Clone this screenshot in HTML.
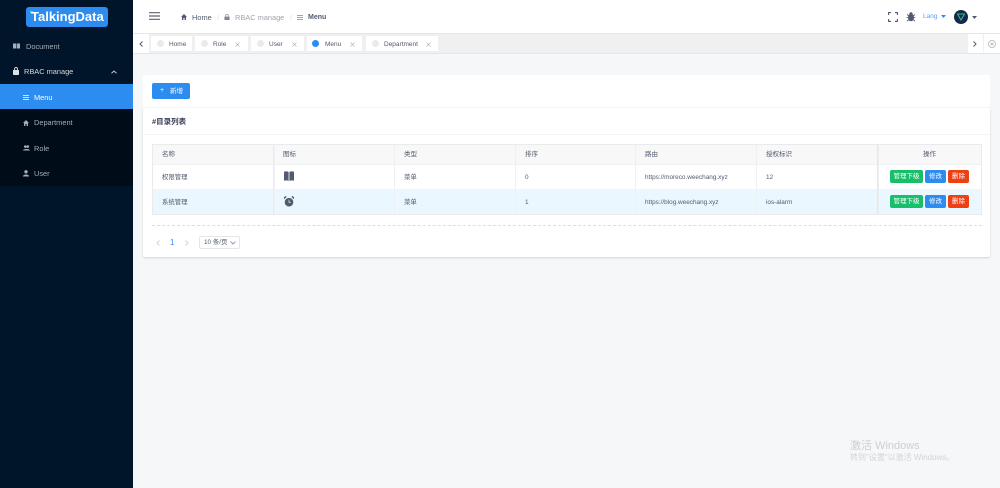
<!DOCTYPE html>
<html lang="zh">
<head>
<meta charset="utf-8">
<title>Menu</title>
<style>
html{margin:0;padding:0;width:1000px;height:488px;overflow:hidden;background:#f5f7f9}
body{margin:0;padding:0;width:1000px;height:488px;overflow:hidden;background:#f5f7f9;font-family:"Liberation Sans","Noto Sans CJK SC",sans-serif;color:#515a6e;filter:blur(.3px)}
*{box-sizing:border-box}
.a{position:absolute}
.t{position:absolute;white-space:nowrap;line-height:12px}
svg{position:absolute;display:block}
#side{left:0;top:0;width:133px;height:488px;background:#001529}
#sub{left:0;top:84px;width:133px;height:102px;background:#000c17}
.tab{position:absolute;top:36px;height:15px;background:#fff}
.dot{position:absolute;top:4px;width:7px;height:7px;border-radius:50%;background:#e8eaec}
.tab .t{top:3px;font-size:6.500px;color:#515a6e}
.th{position:absolute;top:149px;font-size:6.500px;color:#515a6e}
.td{position:absolute;font-size:6.400px;color:#515a6e}
.vl{position:absolute;top:144px;width:1px;height:70px;background:#eef0f2}
.btn{position:absolute;height:13px;border-radius:2px;color:#fff;font-size:6.500px;line-height:14px;text-align:center}
.m{font-size:7.400px}
</style>
</head>
<body>
<div id="side" class="a"></div>
<div id="sub" class="a"></div>
<div class="a" style="left:0;top:84px;width:133px;height:25px;background:#2d8cf0"></div>

<div class="a" style="left:26px;top:7px;width:82px;height:20px;background:#2d8cf0;border-radius:3px"></div>
<div class="a" style="left:30px;top:11px;width:3px;height:2px;background:#3fe0c0"></div>
<div class="t" style="left:31px;top:9px;font-size:13px;line-height:16px;font-weight:bold;color:#fff">TalkingData</div>

<svg style="left:13px;top:43px" width="7" height="6" viewBox="0 0 7 6"><path d="M0 .5h3.200v5H0zM3.800.5H7v5H3.800z" fill="#a6adb4"/></svg>
<div class="t m" style="left:26px;top:41px;color:#a6adb4">Document</div>
<svg style="left:13px;top:67px" width="6" height="8" viewBox="0 0 6 8"><path d="M1.500 3V2a1.500 1.500 0 0 1 3 0v1" fill="none" stroke="#dfe2e5" stroke-width=".9"/><rect y="3" width="6" height="5" rx=".6" fill="#dfe2e5"/></svg>
<div class="t m" style="left:24px;top:66px;color:#d5d8db">RBAC manage</div>
<svg style="left:111px;top:70px" width="6" height="4" viewBox="0 0 6 4"><path d="M.5 3.300 3 1l2.500 2.300" fill="none" stroke="#c5c9cd" stroke-width="1"/></svg>

<svg style="left:23px;top:95px" width="6" height="5" viewBox="0 0 6 5"><path d="M0 .5h6M0 2.500h6M0 4.500h6" stroke="#fff" stroke-width=".8"/></svg>
<div class="t m" style="left:34px;top:92px;color:#fff">Menu</div>
<svg style="left:23px;top:120px" width="6" height="6" viewBox="0 0 6 6"><path d="M3 0 6 3H5V6H3.600V4H2.400V6H1V3H0z" fill="#a6adb4"/></svg>
<div class="t m" style="left:34px;top:117px;color:#a6adb4">Department</div>
<svg style="left:23px;top:145px" width="7" height="6" viewBox="0 0 7 6"><circle cx="2.300" cy="1.600" r="1.300" fill="#a6adb4"/><circle cx="4.800" cy="1.600" r="1.300" fill="#a6adb4"/><path d="M0 5.500C0 3.500 7 3.500 7 5.500z" fill="#a6adb4"/></svg>
<div class="t m" style="left:34px;top:143px;color:#a6adb4">Role</div>
<svg style="left:23px;top:170px" width="6" height="7" viewBox="0 0 6 7"><circle cx="3" cy="1.800" r="1.700" fill="#a6adb4"/><path d="M0 6.500C0 3.800 6 3.800 6 6.500z" fill="#a6adb4"/></svg>
<div class="t m" style="left:34px;top:168px;color:#a6adb4">User</div>

<!-- header -->
<div class="a" style="left:133px;top:0;width:867px;height:33px;background:#fff"></div>
<svg style="left:149px;top:12px" width="11" height="8" viewBox="0 0 11 8"><path d="M0 .7h11M0 4h11M0 7.300h11" stroke="#5d6470" stroke-width="1.200"/></svg>
<svg style="left:181px;top:14px" width="6" height="6" viewBox="0 0 6 6"><path d="M3 0 6 3H5V6H3.600V4H2.400V6H1V3H0z" fill="#515a6e"/></svg>
<div class="t m" style="left:192px;top:12px;color:#515a6e">Home</div>
<div class="t m" style="left:217px;top:12px;color:#dcdee2">/</div>
<svg style="left:224px;top:14px" width="6" height="6" viewBox="0 0 6 7"><path d="M1.500 3V2a1.500 1.500 0 0 1 3 0v1" fill="none" stroke="#808695" stroke-width=".8"/><rect y="3" width="6" height="4" rx=".5" fill="#808695"/></svg>
<div class="t m" style="left:235px;top:12px;color:#a0a4ad">RBAC manage</div>
<div class="t m" style="left:290px;top:12px;color:#dcdee2">/</div>
<svg style="left:297px;top:15px" width="6" height="5" viewBox="0 0 6 5"><path d="M0 .5h6M0 2.500h6M0 4.500h6" stroke="#808695" stroke-width=".8"/></svg>
<div class="t" style="left:308px;top:12px;font-size:7px;font-weight:bold;color:#515a6e">Menu</div>

<svg style="left:888px;top:12px" width="10" height="10" viewBox="0 0 10 10"><path d="M.6 3V.6H3M7 .6h2.400V3M9.400 7v2.400H7M3 9.400H.6V7" fill="none" stroke="#515a6e" stroke-width="1.100"/></svg>
<svg style="left:906px;top:12px" width="10" height="10" viewBox="0 0 10 10"><ellipse cx="5" cy="5.500" rx="3" ry="3.800" fill="#515a6e"/><path d="M1 2.500 3 4M9 2.500 7 4M.6 5.500H2M9.400 5.500H8M1 9l2-1.500M9 9 7 7.500" stroke="#515a6e" stroke-width=".8"/><circle cx="5" cy="1.800" r="1.600" fill="#515a6e"/></svg>
<div class="t" style="left:923px;top:11px;font-size:6.500px;color:#5a9cf0">Lang</div>
<svg style="left:941px;top:15px" width="5" height="3" viewBox="0 0 5 3"><path d="M0 0h5L2.500 3z" fill="#2d8cf0"/></svg>
<div class="a" style="left:954px;top:10px;width:14px;height:14px;border-radius:50%;background:#13294b"></div>
<svg style="left:957px;top:13px" width="8" height="8" viewBox="0 0 8 8"><path d="M.5 1h7L4 7z" fill="none" stroke="#3fb984" stroke-width="1.100"/></svg>
<svg style="left:972px;top:16px" width="5" height="3" viewBox="0 0 5 3"><path d="M0 0h5L2.500 3z" fill="#515a6e"/></svg>

<!-- tabs -->
<div class="a" style="left:133px;top:33px;width:867px;height:21px;background:#f0f0f0;border-top:1px solid #e6e6e6;border-bottom:1px solid #e6e6e6"></div>
<div class="a" style="left:133px;top:34px;width:16px;height:19px;background:#fff"></div>
<svg style="left:139px;top:41px" width="4" height="6" viewBox="0 0 4 6"><path d="M3.500.5 1 3l2.500 2.500" fill="none" stroke="#515a6e" stroke-width="1"/></svg>
<div class="tab" style="left:151px;width:41px"><div class="dot" style="left:6px"></div><div class="t" style="left:18px">Home</div></div>
<div class="tab" style="left:195px;width:53px"><div class="dot" style="left:6px"></div><div class="t" style="left:18px">Role</div><svg style="left:40px;top:6px" width="5" height="5" viewBox="0 0 5 5"><path d="M.5.500l4 4M4.500.500l-4 4" stroke="#b5b5b5" stroke-width=".7"/></svg></div>
<div class="tab" style="left:251px;width:53px"><div class="dot" style="left:6px"></div><div class="t" style="left:18px">User</div><svg style="left:41px;top:6px" width="5" height="5" viewBox="0 0 5 5"><path d="M.5.500l4 4M4.500.500l-4 4" stroke="#b5b5b5" stroke-width=".7"/></svg></div>
<div class="tab" style="left:307px;width:55px"><div class="dot" style="left:5px;background:#2d8cf0"></div><div class="t" style="left:18px">Menu</div><svg style="left:43px;top:6px" width="5" height="5" viewBox="0 0 5 5"><path d="M.5.500l4 4M4.500.500l-4 4" stroke="#b5b5b5" stroke-width=".7"/></svg></div>
<div class="tab" style="left:366px;width:72px"><div class="dot" style="left:6px"></div><div class="t" style="left:18px">Department</div><svg style="left:60px;top:6px" width="5" height="5" viewBox="0 0 5 5"><path d="M.5.500l4 4M4.500.500l-4 4" stroke="#b5b5b5" stroke-width=".7"/></svg></div>
<div class="a" style="left:968px;top:34px;width:32px;height:19px;background:#fff"></div>
<div class="a" style="left:983px;top:34px;width:1px;height:19px;background:#f0f0f0"></div>
<svg style="left:973px;top:41px" width="4" height="6" viewBox="0 0 4 6"><path d="M.5.500 3 3 .5 5.500" fill="none" stroke="#515a6e" stroke-width="1"/></svg>
<svg style="left:988px;top:40px" width="8" height="8" viewBox="0 0 8 8"><circle cx="4" cy="4" r="3.500" fill="none" stroke="#aaa" stroke-width=".7"/><path d="M2.600 2.600l2.800 2.800M5.400 2.600 2.600 5.400" stroke="#aaa" stroke-width=".7"/></svg>

<!-- card 1 -->
<div class="a" style="left:143px;top:75px;width:847px;height:32px;background:#fff;border-radius:2px"></div>
<div class="a" style="left:152px;top:83px;width:38px;height:16px;background:#2d8cf0;border-radius:2px"></div>
<div class="t" style="left:160px;top:85px;font-size:7px;color:#fff">+</div>
<div class="t" style="left:170px;top:86px;font-size:6.500px;color:#fff">新增</div>

<!-- card 2 -->
<div class="a" style="left:143px;top:108px;width:847px;height:149px;background:#fff;border-radius:2px;box-shadow:0 1px 2px rgba(0,0,0,.14)"></div>
<div class="a" style="left:143px;top:134px;width:847px;height:1px;background:#f4f4f4"></div>
<div class="t" style="left:152px;top:116px;font-size:7.500px;font-weight:bold;color:#3a4256">#目录列表</div>

<!-- table -->
<div class="a" style="left:152px;top:144px;width:830px;height:71px;border:1px solid #e8eaec;background:#fff"></div>
<div class="a" style="left:153px;top:145px;width:828px;height:20px;background:#f8f8f9;border-bottom:1px solid #eef0f2"></div>
<div class="a" style="left:153px;top:189px;width:828px;height:25px;background:#ebf7ff"></div>
<div class="vl" style="left:273px;width:2px;background:linear-gradient(90deg,#e4e6e9,#f6f6f7)"></div>
<div class="vl" style="left:394px"></div>
<div class="vl" style="left:515px"></div>
<div class="vl" style="left:635px"></div>
<div class="vl" style="left:756px"></div>
<div class="vl" style="left:877px;width:2px;background:linear-gradient(90deg,#dfe1e5,#f3f4f5)"></div>

<div class="th t" style="left:162px">名称</div>
<div class="th t" style="left:283px">图标</div>
<div class="th t" style="left:404px">类型</div>
<div class="th t" style="left:525px">排序</div>
<div class="th t" style="left:645px">路由</div>
<div class="th t" style="left:766px">授权标识</div>
<div class="th t" style="left:923px">操作</div>

<div class="td t" style="left:162px;top:172px">权限管理</div>
<svg style="left:284px;top:171px" width="10" height="10" viewBox="0 0 10 10"><path d="M0 .8C1.500.2 3.300.2 4.600 1v9C3.300 9.200 1.500 9.200 0 9.800zM10 .8C8.500.2 6.700.2 5.400 1v9c1.300-.8 3.100-.8 4.600-.2z" fill="#515a6e"/></svg>
<div class="td t" style="left:404px;top:172px">菜单</div>
<div class="td t" style="left:525px;top:172px">0</div>
<div class="td t" style="left:645px;top:172px">https://moreco.weechang.xyz</div>
<div class="td t" style="left:766px;top:172px">12</div>

<div class="td t" style="left:162px;top:197px">系统管理</div>
<svg style="left:284px;top:196px" width="10" height="11" viewBox="0 0 10 11"><circle cx="5" cy="6.200" r="4.300" fill="#515a6e"/><path d="M.3 2.800 2.500.8 1.300.3.100 1.500zM9.700 2.800 7.500.8 8.700.3 9.900 1.500z" fill="#515a6e" stroke="#515a6e" stroke-width=".5"/><path d="M5 3.800v2.600h1.800" fill="none" stroke="#cfe3f0" stroke-width=".8"/></svg>
<div class="td t" style="left:404px;top:197px">菜单</div>
<div class="td t" style="left:525px;top:197px">1</div>
<div class="td t" style="left:645px;top:197px">https://blog.weechang.xyz</div>
<div class="td t" style="left:766px;top:197px">ios-alarm</div>

<div class="btn" style="left:890px;top:170px;width:33px;background:#19be6b">管理下级</div>
<div class="btn" style="left:925px;top:170px;width:21px;background:#2d8cf0">修改</div>
<div class="btn" style="left:948px;top:170px;width:21px;background:#ed4014">删除</div>
<div class="btn" style="left:890px;top:195px;width:33px;background:#19be6b">管理下级</div>
<div class="btn" style="left:925px;top:195px;width:21px;background:#2d8cf0">修改</div>
<div class="btn" style="left:948px;top:195px;width:21px;background:#ed4014">删除</div>

<!-- pagination -->
<div class="a" style="left:152px;top:225px;width:830px;height:0;border-top:1px dashed #dcdee2"></div>
<svg style="left:156px;top:240px" width="4" height="6" viewBox="0 0 4 6"><path d="M3.500.5 1 3l2.500 2.500" fill="none" stroke="#c5c8ce" stroke-width=".8"/></svg>
<div class="t" style="left:170px;top:237px;font-size:8px;color:#2d8cf0">1</div>
<svg style="left:185px;top:240px" width="4" height="6" viewBox="0 0 4 6"><path d="M.5.500 3 3 .5 5.500" fill="none" stroke="#c5c8ce" stroke-width=".8"/></svg>
<div class="a" style="left:199px;top:236px;width:41px;height:13px;border:1px solid #e4e6ea;border-radius:2px"></div>
<div class="t" style="left:204px;top:237px;font-size:6.400px;color:#515a6e">10 条/页</div>
<svg style="left:230px;top:241px" width="6" height="4" viewBox="0 0 6 4"><path d="M.5.500 3 3 5.500.500" fill="none" stroke="#808695" stroke-width=".8"/></svg>

<!-- watermark -->
<div class="t" style="left:850px;top:439px;font-size:11px;line-height:14px;color:#cdcfd2">激活 Windows</div>
<div class="t" style="left:850px;top:452px;font-size:8px;line-height:12px;color:#d2d4d7">转到"设置"以激活 Windows。</div>
</body>
</html>
